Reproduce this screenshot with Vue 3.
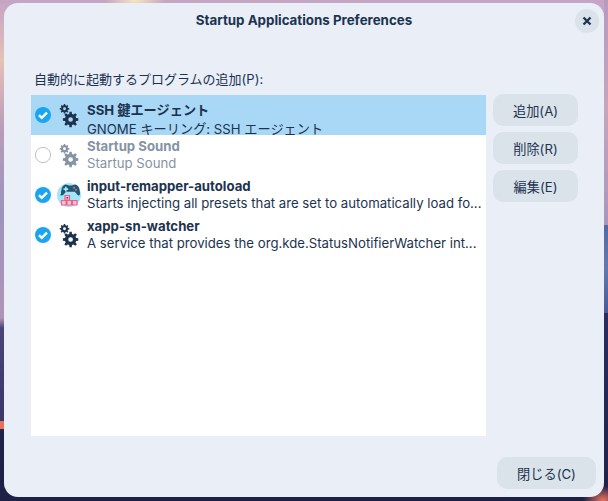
<script setup>
// builds a cog outline, centre (cx, cy), outer radius r
function gear(cx, cy, r, teeth = 8) {
  const inner = r * 0.74
  const pts = []
  for (let i = 0; i < teeth; i++) {
    const a = (i / teeth) * Math.PI * 2
    const w = Math.PI / teeth
    const list = [
      [inner, a - w * 0.62],
      [r, a - w * 0.38],
      [r, a + w * 0.38],
      [inner, a + w * 0.62],
    ]
    for (const [rad, t] of list) {
      pts.push((cx + rad * Math.cos(t)).toFixed(2) + ' ' + (cy + rad * Math.sin(t)).toFixed(2))
    }
  }
  const hole = r * 0.3
  return (
    'M' + pts.join('L') + 'Z' +
    `M${cx - hole} ${cy}a${hole} ${hole} 0 1 0 ${hole * 2} 0a${hole} ${hole} 0 1 0 ${-hole * 2} 0Z`
  )
}

const gearPath = gear(5.5, 4.8, 4.8) + gear(11.6, 15.5, 7.8)

const apps = [
  { name: 'SSH 鍵エージェント', sub: 'GNOME キーリング: SSH エージェント', on: true, selected: true, icon: 'gear' },
  { name: 'Startup Sound', sub: 'Startup Sound', on: false, icon: 'gear' },
  { name: 'input-remapper-autoload', sub: 'Starts injecting all presets that are set to automatically load fo...', on: true, icon: 'pad' },
  { name: 'xapp-sn-watcher', sub: 'A service that provides the org.kde.StatusNotifierWatcher int...', on: true, icon: 'gear' },
]
const actions = ['追加(A)', '削除(R)', '編集(E)']
</script>

<template>
  <div class="desktop">
    <div class="dialog">
      <header class="titlebar">
        <span class="title">Startup Applications Preferences</span>
        <button class="close-x" aria-label="Close">
          <svg width="10" height="10" viewBox="0 0 10 10">
            <path d="M1.5 1.5l7 7M8.5 1.5l-7 7" fill="none" stroke="#1c3350" stroke-width="2.3" />
          </svg>
        </button>
      </header>

      <div class="content">
        <div class="label">自動的に起動するプログラムの追加(P):</div>
        <div class="columns">
          <div class="list">
            <div
              v-for="app in apps"
              :key="app.name"
              class="row"
              :class="{ selected: app.selected, off: !app.on }"
            >
              <svg class="check" width="18" height="18" viewBox="0 0 18 18">
                <template v-if="app.on">
                  <circle cx="9" cy="9" r="8" fill="#1ba5f0" />
                  <path d="M5 9.2l2.8 2.7 5.2-5.2" fill="none" stroke="#fff" stroke-width="2.4" />
                </template>
                <circle v-else cx="9" cy="9" r="7.6" fill="#fff" stroke="#b9c2cc" stroke-width="1" />
              </svg>

              <svg v-if="app.icon === 'gear'" class="app-icon gear" width="20" height="24" viewBox="0 0 20 24">
                <path :d="gearPath" fill-rule="evenodd" />
              </svg>
              <svg v-else class="app-icon pad" width="24" height="24" viewBox="0 0 24 24">
                <circle cx="12" cy="12" r="12" fill="#a6e4f9" />
                <path d="M4 11.5C4 5 6 1.5 9 1.5c1.3 0 1.800.9 3 .9h3c1.200 0 1.700-.9 3-.9 3 0 5 3.500 5 9.500 0 1.500-1.500 1.800-2.400.9l-2.800-3.100h-8.800l-2.600 2.900c-.9 1-3.400 1-3.400-.3z" fill="#1d5a70" />
                <path d="M8 3.800h1.700v1.500h1.500V7H9.700v1.500H8V7H6.500V5.300H8z" fill="#a6e4f9" />
                <circle cx="17" cy="4.800" r="1" fill="#f0648c" />
                <circle cx="19" cy="6.800" r="1" fill="#f0648c" />
                <path d="M8 12.500h4.500V17H8zM4.500 17.500H9V22H4.500zM10 17.500h4.500V22H10zM15.500 17.500H20V22h-4.500z" fill="#fbc6d6" stroke="#ee5f88" stroke-width="1.200" />
                <rect x="9.500" y="14" width="1.600" height="1.600" fill="#8c2f4d" />
              </svg>

              <div class="texts">
                <div class="name">{{ app.name }}</div>
                <div class="sub">{{ app.sub }}</div>
              </div>
            </div>
          </div>

          <div class="actions">
            <button v-for="a in actions" :key="a" class="btn">{{ a }}</button>
          </div>
        </div>
      </div>

      <footer class="footer">
        <button class="btn close-btn">閉じる(C)</button>
      </footer>
    </div>
  </div>
</template>

<style>
html,
body {
  margin: 0;
  overflow: hidden;
}
</style>

<style scoped>
.desktop {
  width: 608px;
  height: 501px;
  box-sizing: border-box;
  padding: 3px 4px 4px;
  background:
    radial-gradient(30px 8px at 135px 1px, #f6e6c0 0%, transparent 100%),
    radial-gradient(20px 14px at 603px 500px, #e8705c 0%, transparent 100%),
    linear-gradient(90deg, #e8705c 4px, transparent 4px) 0 421px / 100% 8px no-repeat,
    linear-gradient(180deg, #5468a6, #6478b0 50%, #4a5a98) 100% 225px / 4px 88px no-repeat,
    linear-gradient(180deg, #b89ac0 0, #c8a4bc 110px, #a896bc 225px) 100% 0 / 4px 225px no-repeat,
    linear-gradient(180deg, #2c2c60 0, #20214a 100%) 100% 313px / 4px 188px no-repeat,
    linear-gradient(180deg, #c4a4c4 0, #e6c0b8 60px, #b89cb8 130px, #9c94bc 210px, #b094b6 318px, #4b4478 328px, #3c3768 420px, #1f2148 432px, #1e2046 501px);
  font-family: Inter, "Noto Sans CJK JP", sans-serif;
  color: #1c3350;
  font-size: 13.2px;
}
.dialog {
  height: 100%;
  background: #e9eef7;
  border-radius: 14px;
  display: flex;
  flex-direction: column;
  overflow: hidden;
}
.titlebar {
  height: 34px;
  flex: none;
  position: relative;
  display: flex;
  align-items: center;
  justify-content: center;
}
.title {
  font-weight: 700;
  font-size: 13.33px;
}
.close-x {
  position: absolute;
  top: 6px;
  right: 5px;
  width: 24px;
  height: 24px;
  padding: 0;
  border: 0;
  border-radius: 50%;
  background: #dbe3ea;
  display: flex;
  align-items: center;
  justify-content: center;
}
.content {
  flex: 1;
  min-height: 0;
  padding: 33px 26px 0 27px;
  display: flex;
  flex-direction: column;
}
.label {
  height: 25px;
  line-height: 18px;
  padding-left: 3px;
  font-size: 13px;
}
.columns {
  height: 341px;
  display: flex;
  gap: 7px;
}
.list {
  width: 455px;
  flex: none;
  background: #fff;
}
.row {
  height: 40px;
  overflow: hidden;
  display: flex;
  align-items: flex-start;
  box-sizing: border-box;
}
.row.selected {
  background: #a9d8f6;
}
.check {
  flex: none;
  margin: 11px 0 0 3px;
}
.app-icon {
  flex: none;
}
.app-icon.gear {
  margin: 9px 2px 0 7px;
}
.app-icon.pad {
  margin: 8px 0 0 5px;
}
.gear path {
  fill: #1c3350;
}
.row.off .gear path {
  fill: #8593a3;
}
.row.off .texts {
  color: #8593a3;
}
.texts {
  min-width: 0;
  flex: 1;
  padding: 3px 5px 0 6px;
  line-height: 17px;
}
.row.selected .texts {
  padding-top: 5px;
}
.row.selected .name {
  line-height: 21px;
}
.name {
  font-weight: 700;
}
.sub {
  white-space: nowrap;
}
.actions {
  display: flex;
  flex-direction: column;
  gap: 6px;
  margin-top: -1px;
}
.btn {
  width: 85px;
  height: 32px;
  padding: 0;
  border: 0;
  border-radius: 10px;
  background: #dbe3ea;
  color: #1c3350;
  font: inherit;
}
.footer {
  flex: none;
  height: 40px;
  display: flex;
  justify-content: flex-end;
  padding-right: 8px;
}
.close-btn {
  width: 99px;
}
</style>
